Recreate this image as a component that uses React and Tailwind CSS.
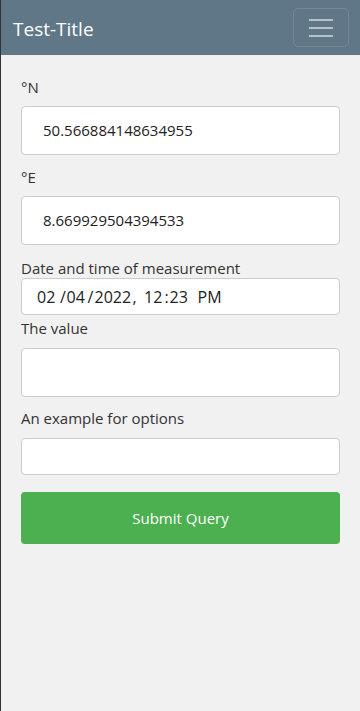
export default function App() {
  const label = "block text-[15px] leading-[20px] text-[#333333]";
  const input = "block w-full bg-white border border-[#cccccc] rounded-[4px] text-[15px] text-[#222222]";
  return (
    <div className="min-h-[711px] w-[360px] bg-[#f1f1f1] border-l border-[#333333] font-['Open_Sans',sans-serif]">
      <header className="h-[55px] bg-[#607788] flex items-center justify-between pl-[12px] pr-[11px]">
        <span className="text-white text-[19px] leading-none pt-[4px]">Test-Title</span>
        <button className="w-[56px] h-[39px] border border-[#ffffff1f] rounded-[5px] flex flex-col items-center justify-center gap-[6px]">
          <span className="block w-[24px] h-[2px] bg-[#b7c1ca]" />
          <span className="block w-[24px] h-[2px] bg-[#b7c1ca]" />
          <span className="block w-[24px] h-[2px] bg-[#b7c1ca]" />
        </button>
      </header>
      <form className="px-[20px] pt-[22px]">
        <label className={label}>°N</label>
        <div className={`${input} h-[49px] mt-[9px] flex items-center pl-[21px]`}>50.566884148634955</div>
        <label className={`${label} mt-[12px]`}>°E</label>
        <div className={`${input} h-[49px] mt-[9px] flex items-center pl-[21px]`}>8.669929504394533</div>
        <label className={`${label} mt-[13px]`}>Date and time of measurement</label>
        <div className={`${input} h-[37px] flex items-center pl-[15px] text-[16px] text-[#111111]`}>
          <span className="inline-block w-[22.5px]">02</span>
          <span className="inline-block w-[7px] text-center">/</span>
          <span className="inline-block w-[20px]">04</span>
          <span className="inline-block w-[8px] text-center">/</span>
          <span className="inline-block w-[38px]">2022</span>
          <span className="inline-block w-[11.5px]">,</span>
          <span className="inline-block w-[20.5px]">12</span>
          <span className="inline-block w-[5px]">:</span>
          <span className="inline-block w-[28px]">23</span>
          <span className="inline-block">PM</span>
        </div>
        <label className={`${label} mt-[3px]`}>The value</label>
        <div className={`${input} h-[49px] mt-[10px]`} />
        <label className={`${label} mt-[11px]`}>An example for options</label>
        <div className={`${input} h-[37px] mt-[10px]`} />
        <button type="button" className="mt-[17px] w-full h-[52px] bg-[#4caf50] rounded-[4px] text-white text-[15px]">Submit Query</button>
      </form>
    </div>
  );
}
